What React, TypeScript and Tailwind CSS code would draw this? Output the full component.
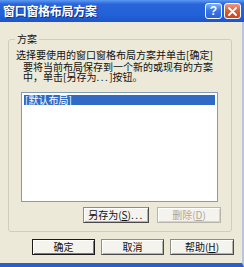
import React from "react";

function TitleButton({ kind }: { kind: "help" | "close" }) {
    const isClose = kind === "close";
    return (
        <div
            className={`flex h-[16px] w-[17px] items-center justify-center rounded-[3px] border border-white text-[12px] font-bold leading-none text-white ${
                isClose
                    ? "bg-[linear-gradient(180deg,#ee9a80_0%,#dd5f3e_45%,#c8461f_100%)]"
                    : "bg-[linear-gradient(180deg,#7fb1f6_0%,#3a78e6_45%,#2c62d4_100%)]"
            }`}
        >
            {isClose ? (
                <svg width="9" height="9" viewBox="0 0 9 9">
                    <path d="M1 1 L8 8 M8 1 L1 8" stroke="white" strokeWidth="1.8" strokeLinecap="round" />
                </svg>
            ) : (
                <span className="font-['Liberation_Sans',sans-serif]">?</span>
            )}
        </div>
    );
}

function Btn({
    children,
    w,
    isDefault,
    disabled,
}: {
    children: React.ReactNode;
    w: string;
    isDefault?: boolean;
    disabled?: boolean;
}) {
    return (
        <div
            className={`flex h-[16px] items-center justify-center whitespace-nowrap border text-[10px] leading-none ${w} ${
                isDefault
                    ? "border-[#1a1a1a] shadow-[inset_1px_1px_0_#ffffff,inset_-1px_-1px_0_#7a7a7a]"
                    : disabled
                    ? "border-[#b8b6ab] shadow-[inset_1px_1px_0_#ffffff,inset_-1px_-1px_0_#d6d3c6]"
                    : "border-[#8d8c86] border-b-[#4a4a4a] border-r-[#4a4a4a] shadow-[inset_1px_1px_0_#ffffff,inset_-1px_-1px_0_#b5b2a6]"
            } ${disabled ? "text-[#aca899]" : "text-[#111]"} bg-[#f4f3ee]`}
        >
            {children}
        </div>
    );
}

export default function App() {
    return (
        <div className="flex h-[267px] w-[244px] flex-col overflow-hidden bg-[#ece9d8] font-['Noto_Sans_CJK_SC',sans-serif]">
            {/* Title bar */}
            <div className="flex h-[22px] shrink-0 items-center justify-between bg-[linear-gradient(180deg,#5b9af2_0%,#2a66da_18%,#2160d6_70%,#1d55c6_100%)] pl-[3px] pr-[3px]">
                <span className="text-[12px] font-bold leading-none tracking-[-0.3px] text-white [text-shadow:1px_1px_0_#0c2f8a]">
                    窗口窗格布局方案
                </span>
                <div className="flex gap-[2px]">
                    <TitleButton kind="help" />
                    <TitleButton kind="close" />
                </div>
            </div>

            {/* Body */}
            <div className="flex flex-1 flex-col border-b-[4px] border-r-[2px] border-b-[#2a5fc8] border-r-[#b9c6e3] pt-[11px]">
                <fieldset className="ml-[8px] h-[199px] w-[224px] min-w-0 rounded-[3px] border border-[#cfcdbf] px-0">
                    <legend className="ml-[6px] px-[2px] text-[10px] leading-[12px] text-[#111]">方案</legend>
                    <div className="mt-[4px] whitespace-nowrap pl-[7px] text-[10px] leading-[11px] text-[#111]">
                        选择要使用的窗口窗格布局方案并单击[确定]
                    </div>
                    <div className="mt-[2px] whitespace-nowrap pl-[14px] text-[10px] leading-[10px] text-[#111]">
                        要将当前布局保存到一个新的或现有的方案
                    </div>
                    <div className="whitespace-nowrap pl-[14px] text-[10px] leading-[10px] text-[#111]">
                        中，单击[另存为<span className="tracking-[1.5px]">...</span>]按钮。
                    </div>
                    <div className="ml-[12px] mt-[10px] h-[110px] w-[197px] border border-[#7f9db9] bg-white p-[2px]">
                        <div className="h-[10px] bg-[#316ac5] pl-[1px] text-[10px] leading-[10px] text-white">
                            [默认布局]
                        </div>
                    </div>
                    <div className="mt-[5px] flex gap-[8px] pl-[74px]">
                        <Btn w="w-[66px]">
                            另存为(<span className="underline">S</span>)
                            <span className="tracking-[1.5px]">...</span>
                        </Btn>
                        <Btn w="w-[64px]" disabled>
                            删除(<span className="underline">D</span>)
                        </Btn>
                    </div>
                </fieldset>
                <div className="mt-[7px] flex gap-[6px] pl-[32px]">
                    <Btn w="w-[63px]" isDefault>
                        确定
                    </Btn>
                    <Btn w="w-[63px]">取消</Btn>
                    <Btn w="w-[64px]">
                        帮助(<span className="underline">H</span>)
                    </Btn>
                </div>
            </div>
        </div>
    );
}
